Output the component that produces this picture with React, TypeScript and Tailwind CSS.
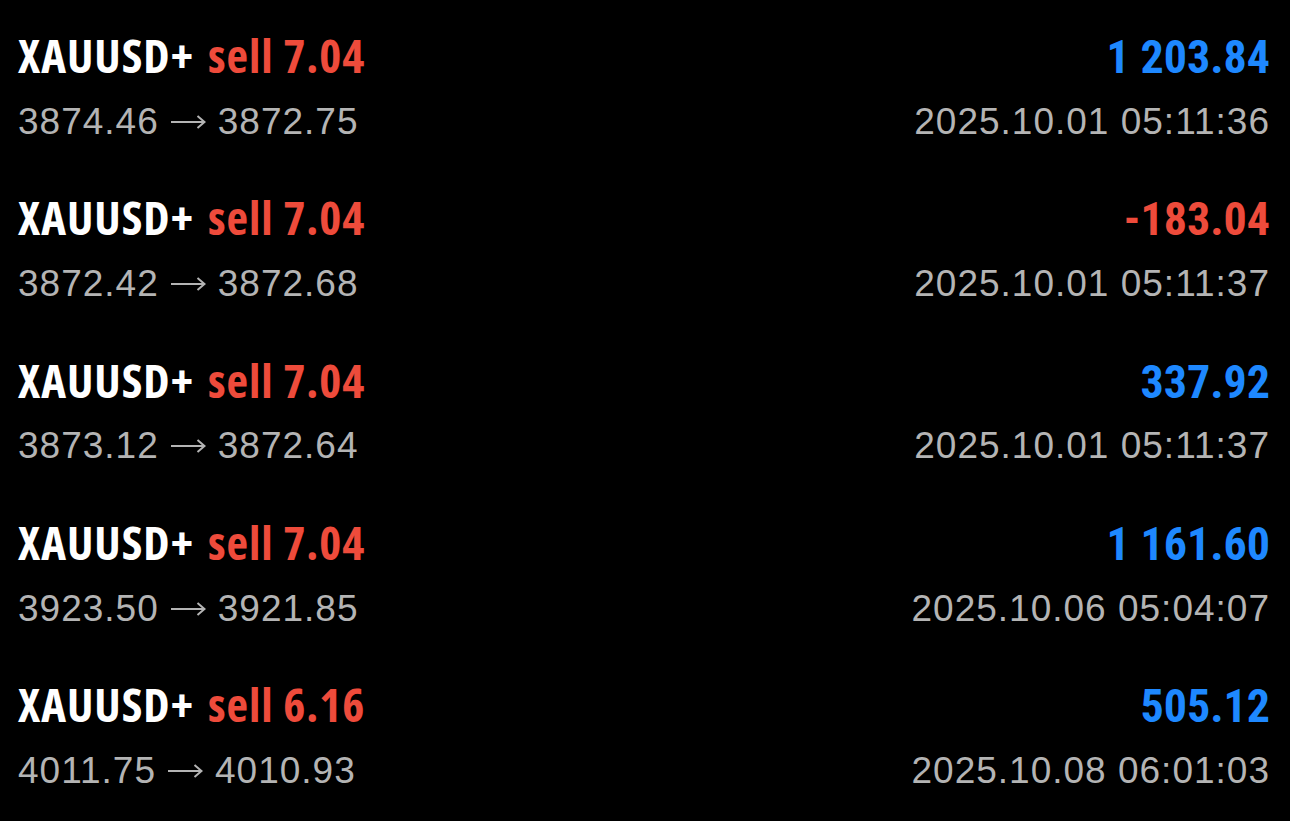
const trades = [
  { side: 'sell 7.04', open: '3874.46', close: '3872.75', profit: '1 203.84', time: '2025.10.01 05:11:36' },
  { side: 'sell 7.04', open: '3872.42', close: '3872.68', profit: '-183.04', time: '2025.10.01 05:11:37' },
  { side: 'sell 7.04', open: '3873.12', close: '3872.64', profit: '337.92', time: '2025.10.01 05:11:37' },
  { side: 'sell 7.04', open: '3923.50', close: '3921.85', profit: '1 161.60', time: '2025.10.06 05:04:07' },
  { side: 'sell 6.16', open: '4011.75', close: '4010.93', profit: '505.12', time: '2025.10.08 06:01:03' },
];

const titleFont = { fontFamily: '"Open Sans", sans-serif', fontStretch: '87%' };
const amountFont = { fontFamily: 'Roboto, sans-serif', fontStretch: '75%' };

function Arrow() {
  return (
    <svg width="35" height="14" viewBox="0 0 35 14" className="inline-block mx-[12px] align-[1px]">
      <path d="M0 7H33M26.5 1L33.5 7L26.5 13" fill="none" stroke="#b4b4b4" strokeWidth="2" />
    </svg>
  );
}

export default function App() {
  return (
    <div className="bg-black min-h-[821px] w-full pt-[32px] pl-[18px] pr-[20px]">
      {trades.map((t, i) => (
        <div key={i} className="h-[162.3px] flex flex-col">
          <div className="flex justify-between items-baseline h-[46px]">
            <div className="text-[47px] leading-[46px] font-bold tracking-[1px] text-white" style={titleFont}>
              XAUUSD+<span className="ml-[14px] text-[#ee4b3b]">{t.side}</span>
            </div>
            <div
              className={
                'text-[46px] leading-[46px] font-bold ' +
                (t.profit.startsWith('-') ? 'text-[#ee4b3b]' : 'text-[#1e88ff]')
              }
              style={amountFont}
            >
              {t.profit}
            </div>
          </div>
          <div className="flex justify-between items-baseline mt-[23.7px] h-[40px] text-[37px] leading-[40px] tracking-[1px] text-[#b4b4b4] font-['Liberation_Sans',sans-serif]">
            <div className="flex items-center">
              <span>{t.open}</span>
              <Arrow />
              <span>{t.close}</span>
            </div>
            <div>{t.time}</div>
          </div>
        </div>
      ))}
    </div>
  );
}
